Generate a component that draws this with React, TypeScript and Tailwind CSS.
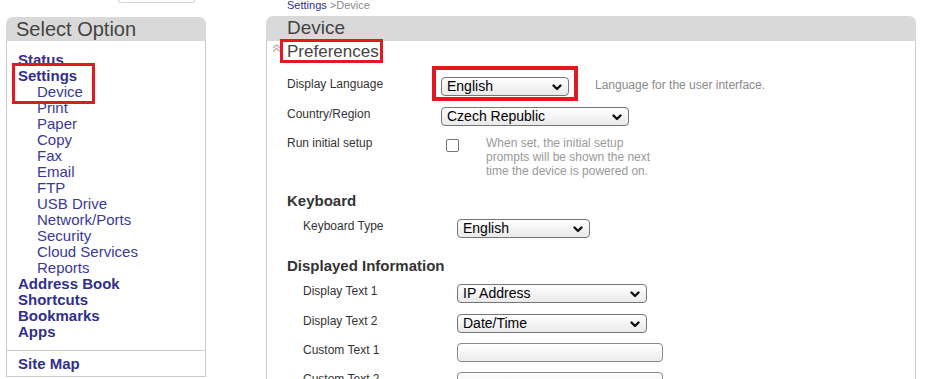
import React from "react";

function Chevron() {
  return (
    <svg width="10" height="7" viewBox="0 0 10 7" className="absolute right-[6px] top-[6px]">
      <path d="M1.5 1.5 L5 5 L8.5 1.5" fill="none" stroke="#111" strokeWidth="2.4" strokeLinecap="round" strokeLinejoin="round" />
    </svg>
  );
}

function Select({ value, w }: { value: string; w: string }) {
  return (
    <div
      className={`relative h-[19px] ${w} rounded-[4px] border border-[#767676] bg-gradient-to-b from-white to-[#e9e9e9] pl-[5px] text-[14px] leading-[17px] text-black`}
    >
      {value}
      <Chevron />
    </div>
  );
}

function Input({ w }: { w: string }) {
  return <div className={`h-[19px] ${w} rounded-[4px] border border-[#8a8a8a] bg-gradient-to-b from-white to-[#ececec]`} />;
}

function Row({ h, indent, label, children }: { h: string; indent?: boolean; label: string; children: React.ReactNode }) {
  return (
    <div className={`flex items-start ${h} ${indent ? "pl-[16px]" : ""}`}>
      <div className="w-[154px] shrink-0 text-[12px] leading-[14px] text-[#333]">{label}</div>
      {children}
    </div>
  );
}

export default function App() {
  const nav: { t: string; b?: boolean }[] = [
    { t: "Status", b: true },
    { t: "Settings", b: true },
    { t: "Device" },
    { t: "Print" },
    { t: "Paper" },
    { t: "Copy" },
    { t: "Fax" },
    { t: "Email" },
    { t: "FTP" },
    { t: "USB Drive" },
    { t: "Network/Ports" },
    { t: "Security" },
    { t: "Cloud Services" },
    { t: "Reports" },
    { t: "Address Book", b: true },
    { t: "Shortcuts", b: true },
    { t: "Bookmarks", b: true },
    { t: "Apps", b: true },
  ];
  return (
    <div
      className="flex h-[379px] w-[932px] overflow-hidden bg-white"
      style={{ fontFamily: '"Liberation Sans", Arial, sans-serif' }}
    >
      {/* Left column */}
      <div className="ml-[6px] w-[200px] shrink-0">
        <div className="ml-[112px] h-[3px] w-[77px] rounded-b-[3px] border-x border-b border-[#d4d4d4]" />
        <div className="relative mt-[14px]">
          <div className="h-[24px] rounded-t-[7px] bg-[#d9d9d9] pl-[10px] text-[20px] leading-[24px] text-[#444]">
            Select Option
          </div>
          <div className="border-x border-b border-[#cccccc]">
            <div className="pl-[11px] pt-[11px] pb-[10px]">
              {nav.map((n) => (
                <div
                  key={n.t}
                  className={
                    n.b
                      ? "h-[16px] text-[15px] font-bold leading-[16px] text-[#30308a]"
                      : "h-[16px] pl-[19px] text-[15px] leading-[16px] text-[#3a3a96]"
                  }
                >
                  {n.t}
                </div>
              ))}
            </div>
            <div className="border-t border-[#cccccc] pl-[11px] pt-[5px] pb-[4px] text-[15px] font-bold leading-[16px] text-[#30308a]">
              Site Map
            </div>
          </div>
          <div className="pointer-events-none absolute left-[6px] top-[46px] h-[41px] w-[83px] border-[3px] border-[#e3191f]" />
        </div>
      </div>

      {/* Right column */}
      <div className="ml-[60px] w-[650px] shrink-0">
        <div className="h-[16px] pl-[21px] text-[11px] leading-[11px]">
          <span className="text-[#30308a]">Settings</span>
          <span className="text-[#8a8a8a]"> &gt;Device</span>
        </div>
        <div className="h-[25px] rounded-t-[7px] bg-[#d9d9d9] pl-[21px] text-[19px] leading-[24px] text-[#444]">
          Device
        </div>
        <div className="h-[400px] border-x border-[#cccccc] pl-[20px]">
          <div className="relative h-[36px]">
            <svg width="9" height="8" viewBox="0 0 9 8" className="absolute left-[-15px] top-[3px]">
              <path d="M1 4 L4.5 1 L8 4 M1 7.5 L4.5 4.5 L8 7.5" fill="none" stroke="#b5b5b5" strokeWidth="1.4" />
            </svg>
            <div className="pt-[1px] text-[17px] leading-[20px] text-[#444]">Preferences</div>
            <div className="pointer-events-none absolute left-[-7px] top-[-2px] h-[24px] w-[103px] border-[3px] border-[#e3191f]" />
          </div>
          <Row h="h-[30px]" label="Display Language">
            <div className="relative">
              <Select value="English" w="w-[128px]" />
              <div className="pointer-events-none absolute left-[-9px] top-[-11px] h-[35px] w-[146px] border-[4px] border-[#e3191f]" />
            </div>
            <div className="ml-[26px] pt-[1px] text-[12px] leading-[14px] text-[#8a8a8a]">
              Language for the user interface.
            </div>
          </Row>
          <Row h="h-[29px]" label="Country/Region">
            <Select value="Czech Republic" w="w-[188px]" />
          </Row>
          <Row h="h-[56px]" label="Run initial setup">
            <div className="ml-[5px] mt-[3px] h-[13px] w-[13px] rounded-[2px] border border-[#767676] bg-white" />
            <div className="ml-[27px] w-[184px] text-[12px] leading-[14px] text-[#999]">
              When set, the initial setup prompts will be shown the next time the device is powered on.
            </div>
          </Row>
          <div className="h-[27px] text-[15px] font-bold leading-[18px] text-[#333]">Keyboard</div>
          <Row h="h-[38px]" indent label="Keyboard Type">
            <Select value="English" w="w-[133px]" />
          </Row>
          <div className="h-[27px] text-[15px] font-bold leading-[18px] text-[#333]">Displayed Information</div>
          <Row h="h-[30px]" indent label="Display Text 1">
            <Select value="IP Address" w="w-[190px]" />
          </Row>
          <Row h="h-[29px]" indent label="Display Text 2">
            <Select value="Date/Time" w="w-[190px]" />
          </Row>
          <Row h="h-[29px]" indent label="Custom Text 1">
            <Input w="w-[206px]" />
          </Row>
          <Row h="h-[29px]" indent label="Custom Text 2">
            <Input w="w-[206px]" />
          </Row>
        </div>
      </div>
    </div>
  );
}
